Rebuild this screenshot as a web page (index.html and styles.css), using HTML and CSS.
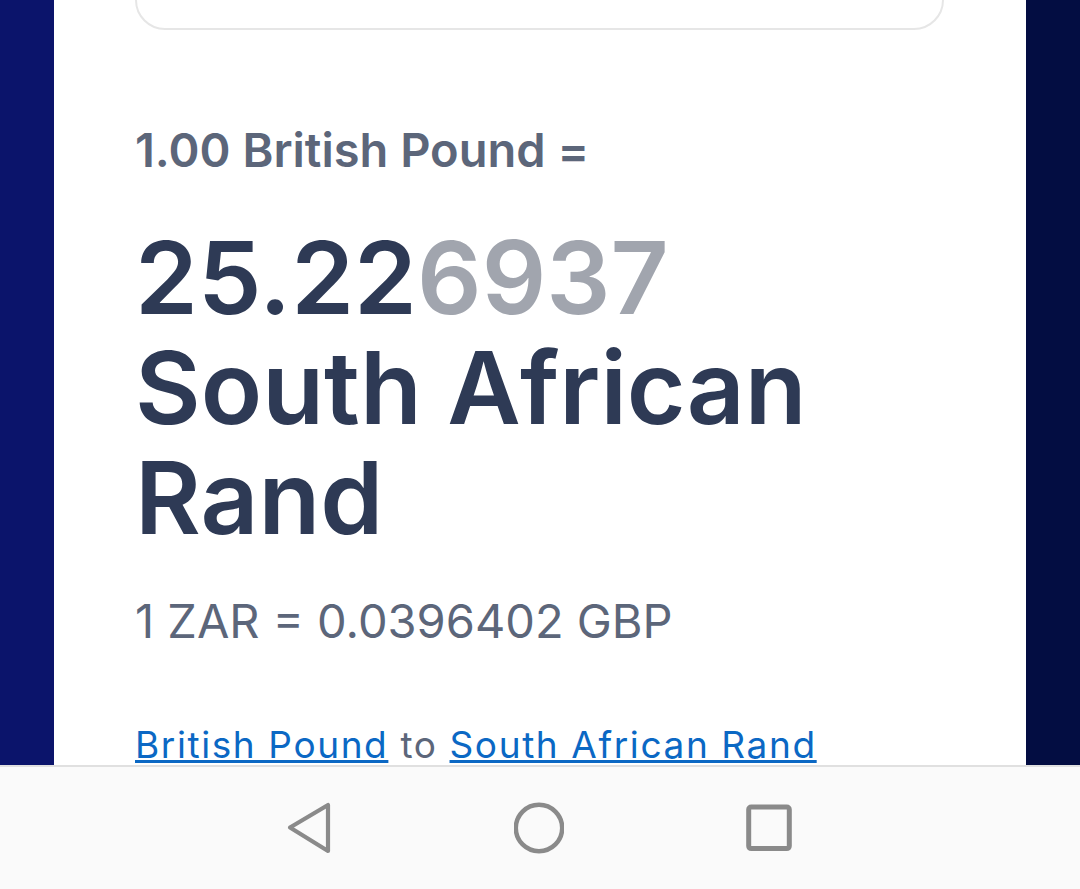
FILE: index.html
```html
<!DOCTYPE html>
<html lang="en">
<head>
<meta charset="UTF-8">
<meta name="viewport" content="width=device-width, initial-scale=1.0">
<title>GBP to ZAR</title>
<link rel="stylesheet" href="styles.css">
</head>
<body>

<div class="screen">
    <div class="side side-left"></div>
    <div class="card">
        <div class="input-box"></div>
        <p class="from">1.00 British Pound =</p>
        <p class="result">25.22<span class="faded">6937</span> South African Rand</p>
        <p class="rate">1 ZAR = 0.0396402 GBP</p>
        <p class="pair"><a href="#">British Pound</a> to <a href="#">South African Rand</a></p>
    </div>
    <div class="side side-right"></div>
</div>

<div class="navbar">
    <svg class="nav-icon" width="50" height="52" viewBox="0 0 50 52">
        <path d="M6 25.5 L44 3 L44 49 Z" fill="none" stroke="#8a8a8a" stroke-width="4.2" stroke-linejoin="round"/>
    </svg>
    <svg class="nav-icon" width="50" height="52" viewBox="0 0 50 52">
        <circle cx="25" cy="26" r="23.2" fill="none" stroke="#8a8a8a" stroke-width="4.5"/>
    </svg>
    <svg class="nav-icon" width="50" height="52" viewBox="0 0 50 52">
        <rect x="4.7" y="5" width="40.6" height="41.6" rx="2.5" fill="none" stroke="#8a8a8a" stroke-width="5"/>
    </svg>
</div>

</body>
</html>
```

FILE: styles.css
```css
body {
    margin: 0;
    font-family: Inter, "Noto Sans", sans-serif;
    height: 889px;
    display: flex;
    flex-direction: column;
    overflow: hidden;
}
.screen {
    flex: 1;
    display: flex;
    overflow: hidden;
}
.side {
    width: 54px;
}
.side-left {
    background-color: #0b146b;
}
.side-right {
    background-color: #030d42;
}
.card {
    flex: 1;
    background-color: #ffffff;
    padding: 0 82px 0 81px;
}
.input-box {
    height: 100px;
    margin-top: -74px;
    border: 2px solid #e6e6e6;
    border-radius: 30px;
}
.from {
    margin: 85px 0 0;
    font-size: 47px;
    line-height: 70px;
    font-weight: 600;
    color: #5c667a;
}
.result {
    margin: 37px 0 0;
    font-size: 101px;
    line-height: 110px;
    font-weight: 600;
    color: #2e3a55;
}
.faded {
    color: #a1a5ae;
}
.rate {
    margin: 34px 0 0;
    font-size: 47px;
    line-height: 70px;
    color: #5c667a;
}
.pair {
    margin: 69px 0 0;
    font-size: 37px;
    line-height: 40px;
    letter-spacing: 1.6px;
    color: #5c667a;
}
.pair a {
    color: #0b68c4;
    text-decoration-thickness: 3px;
}
.navbar {
    height: 122px;
    border-top: 2px solid #e0e0e0;
    background-color: #fafafa;
    display: flex;
    justify-content: center;
    align-items: center;
    gap: 180px;
    padding-right: 3px;
}
.nav-icon {
    display: block;
}
```
